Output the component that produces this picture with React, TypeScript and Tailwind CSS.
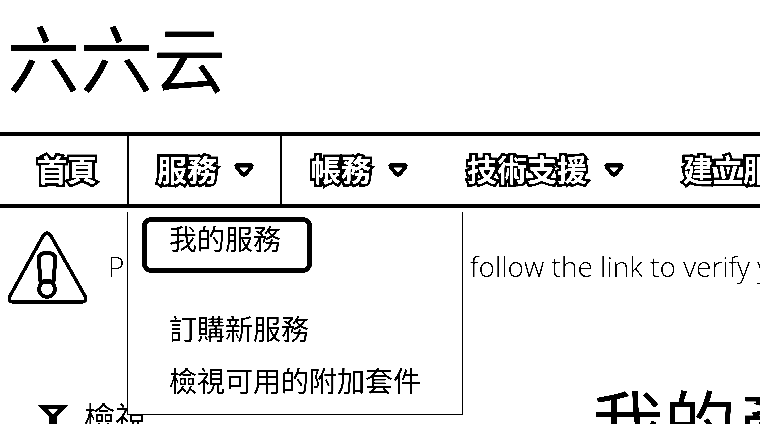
const cjk = "font-['Open_Sans','Noto_Sans_CJK_TC',sans-serif]";

const outlined =
    "text-white font-bold [-webkit-text-stroke:5px_black] [paint-order:stroke_fill] [stroke-linejoin:round] whitespace-nowrap";

function Caret() {
    return (
        <svg width="20" height="14" viewBox="0 0 20 14" className="shrink-0">
            <path d="M4 0 H16 Q21 0 19 5 Q15 10 13 12.5 Q10 15 7 12.5 Q5 10 1 5 Q-1 0 4 0 Z" fill="black" />
            <path d="M5 4.5 H15 L10 9.5 Z" fill="white" />
        </svg>
    );
}

function WarningIcon() {
    return (
        <svg width="81" height="74" viewBox="0 0 81 74" className="shrink-0">
            <path
                d="M40 2 Q42 2 44 5 L78 65 Q80 71 75 71 H6 Q1 71 3 65 L36 5 Q38 2 40 2 Z"
                fill="none"
                stroke="black"
                strokeWidth="3.5"
                strokeLinejoin="round"
            />
            <path
                d="M32 27 Q32 22 40 22 Q48 22 48 27 L47 49 Q47 51 40 51 Q33 51 33 49 Z"
                fill="none"
                stroke="black"
                strokeWidth="4"
            />
            <circle cx="40" cy="58" r="8" fill="none" stroke="black" strokeWidth="4" />
        </svg>
    );
}

function FilterIcon() {
    return (
        <svg width="30" height="24" viewBox="0 0 30 24" className="shrink-0">
            <path d="M0 0 H30 L19 12 V24 H11 V12 Z M10 4 L15 9 L20 4 Z" fill="black" fillRule="evenodd" />
        </svg>
    );
}

const navItems = [
    { label: "首頁", w: "w-[129px]", pad: "pl-[37px]", border: true },
    { label: "服務", w: "w-[153px]", pad: "pl-[28px]", caret: true, border: true },
    { label: "帳務", w: "w-[156px]", pad: "pl-[29px]", caret: true },
    { label: "技術支援", w: "w-[216px]", pad: "pl-[29px]", caret: true },
    { label: "建立服務單", w: "w-[200px]", pad: "pl-[29px]" },
];

export default function App() {
    return (
        <div className={`relative h-[424px] w-[760px] overflow-hidden bg-white text-black contrast-[1000%] ${cjk}`}>
            <div className="h-[132px] pl-[7px] pt-[11px] text-[73px] leading-[96px]">六六云</div>

            <nav className="flex h-[76px] border-y-4 border-black">
                {navItems.map((item) => (
                    <div
                        key={item.label}
                        className={`flex shrink-0 items-center gap-[17px] ${item.w} ${item.pad} ${
                            item.border ? "border-r-2 border-black" : ""
                        }`}
                    >
                        <span className={`text-[30px] leading-none ${outlined}`}>{item.label}</span>
                        {item.caret && <Caret />}
                    </div>
                ))}
            </nav>

            <div className="flex items-center gap-[20px] pl-[7px] pt-[23px]">
                <WarningIcon />
                <p className="whitespace-nowrap pb-[4px] text-[28px] font-light leading-[40px]">
                    Please check your email and follow the link to verify your email
                </p>
            </div>

            <div className="flex pt-[70px]">
                <div className="mt-[22px] flex h-[40px] w-[592px] shrink-0 items-center gap-[16px] pl-[38px] text-[31px] leading-[40px]">
                    <FilterIcon />
                    <span>檢視</span>
                </div>
                <h1 className="whitespace-nowrap text-[72px] leading-[96px]">我的產品與服務</h1>
            </div>

            {/* dropdown */}
            <div className="absolute left-[127px] top-[212px] h-[203px] w-[336px] border-x border-b border-black bg-white text-[28px]">
                <div className="ml-[14px] mt-[5px] h-[56px] w-[170px] rounded-[9px] border-[5px] border-black pl-[22px] text-[28px] leading-[34px]">
                    我的服務
                </div>
                <div className="pl-[41px] pt-[30px] leading-[52px]">訂購新服務</div>
                <div className="pl-[41px] leading-[52px]">檢視可用的附加套件</div>
            </div>
        </div>
    );
}
